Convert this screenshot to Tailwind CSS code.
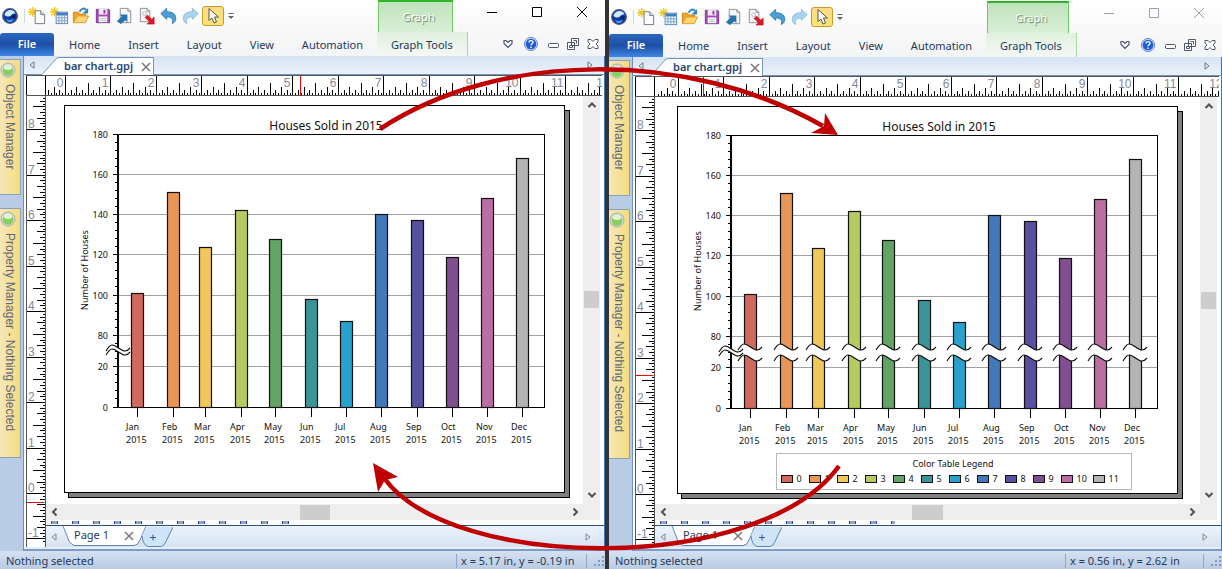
<!DOCTYPE html>
<html lang="en">
<head>
  <meta charset="UTF-8" />
  <meta name="viewport" content="width=device-width, initial-scale=1.0" />
  <title>bar chart.gpj</title>
  <script src="https://cdn.jsdelivr.net/npm/@tailwindcss/browser@4"></script>
</head>
<body class="bg-[#333] font-['Noto_Sans','Open_Sans',sans-serif] text-[11px] text-[#1e395b]">
  <main id="windows" class="relative grid min-h-screen grid-cols-[609fr_613fr] overflow-hidden"></main>

  <script>
    const colors = ["#d2695e", "#e99555", "#f0c75a", "#b5cb60", "#62a464", "#3b9499", "#27a1cd", "#4379b9", "#5652a1", "#804f8f", "#bb6da4", "#b3b5b4"];
    const sales = [
      { month: "Jan", x: 137, value: 101 },
      { month: "Feb", x: 173, value: 151 },
      { month: "Mar", x: 205, value: 124 },
      { month: "Apr", x: 241, value: 142 },
      { month: "May", x: 275, value: 128 },
      { month: "Jun", x: 311, value: 98 },
      { month: "Jul", x: 346, value: 87 },
      { month: "Aug", x: 381, value: 140 },
      { month: "Sep", x: 417, value: 137 },
      { month: "Oct", x: 452, value: 119 },
      { month: "Nov", x: 487, value: 148 },
      { month: "Dec", x: 522, value: 168 }
    ];

    const INCH = 45.48;

    // y of a house count: the axis is cut between 20 and 80
    const yOf = v => v >= 70 ? 295 - (v - 100) * 2.0125 : 407 - v * 2.0125;

    const line = (x1, y1, x2, y2, stroke = "#000", w = 1) =>
      `<line x1="${x1}" y1="${y1}" x2="${x2}" y2="${y2}" stroke="${stroke}" stroke-width="${w}" shape-rendering="crispEdges"/>`;

    const tickLength = i => {
      if (i % 16 === 0) return 20;
      if (i % 8 === 0) return 13;
      if (i % 4 === 0) return 9;
      return i % 2 === 0 ? 6 : 3;
    };

    const mod16 = i => ((i % 16) + 16) % 16;

    const topRuler = w => {
      let out = "";
      const zero = 19.5 + w.scroll;
      for (let i = -12; i < 200; i++) {
        const x = Math.floor(zero + i * INCH / 16) + 0.5;
        if (x < 1) continue;
        out += line(x, 20 - tickLength(mod16(i)), x, 20);
        if (i >= 0 && i % 16 === 0) out += `<text x="${x - 2}" y="11" text-anchor="end">${i / 16}</text>`;
      }
      return out + line(w.markX, 0, w.markX, 20, "#f00");
    };

    const sideRuler = w => {
      let out = "";
      for (let i = -17; i < 142; i++) {
        const y = Math.floor(397.5 - i * INCH / 16) + 0.5;
        if (y < 0) continue;
        out += line(19 - tickLength(mod16(i)), y, 19, y);
        if (mod16(i) === 0) out += `<text x="1" y="${y - 2}">${i / 16}</text>`;
      }
      return out + line(0, w.markY, 17, w.markY, "#f00") + line(17, w.markY, 19, w.markY, "#0ff");
    };

    // crest then trough, 24 wide
    const wave = (x, y) => `M${x} ${y}c3 -5 5 -6 6 -6c5 0 8 6 13 6c3 0 4 -2 5 -3`;
    const waveBack = gap => `l0 ${gap}c-1 1 -2 3 -5 3c-5 0 -8 -6 -13 -6c-1 0 -3 1 -6 6z`;

    const axisBreak = (x, y, gap) =>
      `<path d="${wave(x, y)}${waveBack(gap)}" fill="#fff"/>` +
      `<path d="${wave(x, y)}${wave(x, y + gap)}" fill="none" stroke="#111" stroke-width="1.200"/>`;

    const chart = w => {
      let out = "";
      [180, 160, 140, 120, 100, 80, 20, 0].forEach(v => {
        const y = Math.floor(yOf(v)) + 0.5;
        out += line(118, y, 545, y, v === 180 ? "#777" : "#a0a0a0") + line(113, y, 118, y);
        out += `<text x="108" y="${y + 3}" text-anchor="end">${v}</text>`;
      });
      for (let v = 72; v < 180; v += 4) out += line(115, yOf(v), 118, yOf(v));
      for (let v = 4; v < 28; v += 4) out += line(115, yOf(v), 118, yOf(v));
      out += line(544.5, 134, 544.5, 407) + line(117, 134.5, 545, 134.5) + line(118, 134, 118, 408, "#000", 2) + line(113, 407.5, 545, 407.5);

      sales.forEach((s, i) => {
        const top = Math.round(yOf(s.value) - 0.1) + 0.5;
        out += `<rect x="${s.x - 5.5}" y="${top}" width="12" height="${407.5 - top}" fill="${colors[i]}" stroke="#111" stroke-width="1.200"/>`;
        out += line(s.x + 0.5, 408, s.x + 0.5, 417);
        out += `<text x="${s.x - 11}" y="430">${s.month}</text><text x="${s.x - 11}" y="443">2015</text>`;
        if (w.legend) out += axisBreak(s.x - 12, 349, 11);
      });

      out += axisBreak(106, 351, 4);
      out += `<text x="326" y="130" text-anchor="middle" font-size="12">Houses Sold in 2015</text>`;
      out += `<text transform="translate(88 270) rotate(-90)" text-anchor="middle">Number of Houses</text>`;
      return out;
    };

    const legend = () => {
      let out = `<rect x="163.5" y="452.5" width="355" height="36" fill="#fff" stroke="#b8b8b8"/>`;
      out += `<text x="340" y="466" text-anchor="middle">Color Table Legend</text>`;
      colors.forEach((c, i) => {
        const x = 168.5 + i * 28 + (i === 11 ? 4 : 0);
        out += `<rect x="${x}" y="474.5" width="11" height="7" fill="${c}" stroke="#111"/>`;
        out += `<text x="${x + 15}" y="481">${i}</text>`;
      });
      return out;
    };

    const page = w => `
      <rect x="68" y="110" width="502" height="388" fill="#000"/>
      <rect x="69" y="111" width="500" height="386" fill="#808080"/>
      <rect x="64.5" y="105.5" width="500" height="387" fill="#fff" stroke="#000"/>
      ${chart(w)}${w.legend ? legend() : ""}`;

    const starburst = `<path d="M6 1v10M1 6h10M2.500 2.500l7 7M9.500 2.500l-7 7" stroke="#f3c81c" stroke-width="1.500"/>`;

    const tools = [
      ["New plot", starburst + `<path d="M8.500 5h6l4 4v9.500h-10z" fill="#fafbfc" stroke="#72777e"/><path d="M14.500 5v4h4" fill="#d5d9df" stroke="#72777e"/>`],
      ["New worksheet", starburst + `<rect x="7.500" y="6.500" width="12" height="12" fill="#fff" stroke="#5b87b8"/><path d="M8 7h11v3H8z" fill="#3f7fc4"/><path d="M10.500 10v8M13.500 10v8M16.500 10v8M8 12.500h11M8 15.500h11" stroke="#6f9fce"/>`],
      ["Open", `<path d="M2.500 17.500V6.500h5l2 2h6v3" fill="#f2a42c" stroke="#d48315"/><path d="M2.500 17.500l4-7h12l-3.500 7z" fill="#ffd873" stroke="#e39a22"/><path d="M9 6c2-4 5-4 7-2" fill="none" stroke="#2f86c4" stroke-width="2"/><path d="M18 2v6h-6z" fill="#2f86c4"/>`],
      ["Save", `<path d="M3.500 3.500h13l1 1v13h-14z" fill="#a34cb5" stroke="#75378f"/><rect x="6" y="3" width="9" height="6" fill="#f5e9f8"/><rect x="11" y="4" width="2" height="4" fill="#8b3fa0"/><rect x="6" y="11" width="9" height="6" fill="#fff"/><path d="M7 13h7M7 15h7" stroke="#bfb4c7"/>`],
      ["Import", `<path d="M5.500 2.500h8l3 3v12h-11z" fill="#f5f6f8" stroke="#8b9097"/><path d="M13.500 2.500v3h3" fill="none" stroke="#8b9097"/><path d="M2 16l5-5-2-2h8v8l-2-2-5 4z" fill="#2773ac"/>`],
      ["Export", `<path d="M3.500 2.500h7l3 3v11h-10z" fill="#f5f6f8" stroke="#8b9097"/><path d="M10.500 2.500v3h3" fill="none" stroke="#8b9097"/><circle cx="8" cy="8" r="2" fill="none" stroke="#b6bac1"/><path d="M8.500 12l2.500-2.500 4.500 4.500L18 11.500V19h-7.500l2.500-2.500z" fill="#e11b22" stroke="#a81016" stroke-width=".6"/>`],
      ["Undo", `<path d="M2 8l6-5.500v3.500c7 0 10 3 9.500 8-.3 2-1.500 3.500-3.500 4.500 1.500-5-1-7-6-7V14z" fill="#4b9fd6" stroke="#2d7db5"/>`],
      ["Redo", `<path d="M18 8l-6-5.500v3.500c-7 0-10 3-9.500 8 .3 2 1.500 3.500 3.500 4.500-1.500-5 1-7 6-7V14z" fill="#a8d4ec" stroke="#8abfdd"/>`]
    ];

    const toolButtons = tools.map(([label, art]) => `
      <button class="w-[22px]" aria-label="${label}"><svg class="mx-auto size-5" viewBox="0 0 21 21" fill="none">${art}</svg></button>`).join("");

    const windowHtml = w => `
      <section class="flex min-w-0 flex-col overflow-hidden bg-white ${w.frame}">
        <div class="flex h-8 shrink-0 bg-linear-to-b from-white to-[#f8f8f8]">
          <div class="flex w-[378px] shrink-0 items-center">
            <svg class="ml-0.5 size-4" viewBox="0 0 16 16">
              <circle cx="8" cy="8" r="7.300" fill="#1238a0" stroke="#4a567c" stroke-width="1.300"/>
              <path d="M2.500 7C3 3.500 6 2 8.500 2S13 3.500 13.500 6c-2-1-3 0-4.500 1.500S5 9 2.500 7z" fill="#cdeaf9"/>
              <path d="M4 11c2 1.500 5 1.500 8-.5C11 13 9.500 14 8 14s-3.300-1-4-3z" fill="#43b0ea"/>
              <path d="M8.500 8.500L13.500 6.500q.5 2-1 4z" fill="#0a1c6b"/>
            </svg>
            <span class="mr-px ml-1.5 h-3.5 w-px bg-gray-300"></span>
            ${toolButtons}
            <button class="flex h-5 w-[22px] items-center justify-center rounded-[3px] border border-[#c89a2e] bg-linear-to-b from-[#fbdc84] to-[#fde372]" aria-label="Select">
              <svg class="size-[18px]" viewBox="0 0 18 18"><path d="M5 1.500v12l3-2.500 2 5 2.500-1-2-5h4z" fill="#fff" stroke="#555"/></svg>
            </button>
            <button class="ml-[3px]" aria-label="More tools"><svg class="size-2" viewBox="0 0 8 8"><path d="M1.500 1.500h5" stroke="#666"/><path d="M1 4h6L4 7z" fill="#666"/></svg></button>
          </div>
          <div class="${w.graphTab} flex shrink-0 items-center justify-center border-x border-t-2 border-x-[#6cc864] border-t-[#2bb52b] bg-linear-to-b from-[#bfe3bb] to-[#d9efd6] pl-1.5 text-white [text-shadow:1px_1px_1px_#5d7a5b]">Graph</div>
          <div class="${w.buttons} ml-auto flex h-6 shrink-0">
            <button class="w-11" aria-label="Minimize"><svg class="mx-auto size-3" viewBox="0 0 12 12" stroke="currentColor"><path d="M1 6.500h10"/></svg></button>
            <button class="w-[45px]" aria-label="Maximize"><svg class="mx-auto size-3" viewBox="0 0 12 12" fill="none" stroke="currentColor"><path d="M1.500 1.500h9v9h-9z"/></svg></button>
            <button class="w-[46px]" aria-label="Close"><svg class="mx-auto size-3" viewBox="0 0 12 12" stroke="currentColor"><path d="M1 1l10 10M11 1L1 11"/></svg></button>
          </div>
        </div>

        <nav class="flex h-6 shrink-0 items-center bg-linear-to-b from-[#f8f8f8] to-[#f3f4f5]">
          <button class="mt-px mr-px h-[23px] w-[54px] shrink-0 rounded-t-[3px] bg-linear-to-b from-[#2b67bf] via-[#1d4fa5] to-[#3f86e6] font-semibold text-white">File</button>
          ${["Home", "Insert", "Layout", "View", "Automation"].map(t => `<a href="#" class="px-3.5 pt-0.5">${t}</a>`).join("")}
          <a href="#" class="border-r border-[#a6d8a2] bg-linear-to-b from-[#e0f1de] to-[#f5f7f5] px-3.5 pt-0.5 leading-[22px] whitespace-nowrap">Graph Tools</a>
          <div class="ml-auto flex items-center gap-2 pr-1.5">
            <button aria-label="Collapse ribbon"><svg class="size-3" viewBox="0 0 12 12" fill="none" stroke="#4d566b" stroke-width="1.200"><path d="M2 2.500h2l2 2 2-2h2v3l-4 4-4-4z"/></svg></button>
            <button class="ml-0.5" aria-label="Help"><svg class="size-3.5" viewBox="0 0 14 14"><circle cx="7" cy="7" r="6.500" fill="#d8e4fa" stroke="#5b80cf"/><circle cx="7" cy="7" r="5.300" fill="#1b5bd6"/><path d="M5 5.500c0-2.500 4-2.500 4-.3C9 6.700 7 6.700 7 8.300M7 9.600v1.400" fill="none" stroke="#fff" stroke-width="1.400"/></svg></button>
            <button class="ml-0.5" aria-label="Minimize document"><svg class="h-3 w-[11px]" viewBox="0 0 11 12"><rect x=".5" y="5.500" width="10" height="4" rx="1" fill="#fff" stroke="#4d566b"/></svg></button>
            <button aria-label="Restore document"><svg class="size-3" viewBox="0 0 12 12" fill="#fff" stroke="#4d566b"><path d="M4.500 .5h7v7h-7zM.5 4.500h7v7h-7z"/><path d="M2.500 7.500h3v2h-3zM6.500 2.500h3v3"/></svg></button>
            <button aria-label="Close document"><svg class="size-3" viewBox="0 0 12 12" fill="#fff" stroke="#4d566b"><path d="M1 1.500h3l2 2 2-2h3V4L9 6l2 2v2.500H8l-2-2-2 2H1V8l2-2-2-2z"/></svg></button>
          </div>
        </nav>

        <div class="flex min-h-0 flex-1 border-r border-[#3f76b5] bg-[#b9cce5]">
          <aside class="flex w-[23px] shrink-0 flex-col gap-[13px] pt-[3px]">
            ${["Object Manager", "Property Manager - Nothing Selected"].map((t, i) => `
            <button class="${i ? "h-[250px]" : "h-[136px]"} flex w-[21px] flex-col items-center gap-1.5 border border-l-0 border-[#8aa0bd] bg-linear-to-r from-[#f5e7b7] to-[#f6dc7c] pt-0.5 text-[#626778]">
              <svg class="mr-1 size-4" viewBox="0 0 16 16"><circle cx="8" cy="8" r="7" fill="#d3ddd4" stroke="#a7b1a8"/><circle cx="8" cy="8.500" r="5.300" fill="#86d05f"/><ellipse cx="8" cy="5.500" rx="4" ry="2.500" fill="#e2f5d8"/></svg>
              <span class="[writing-mode:vertical-rl] font-['Liberation_Sans',sans-serif] text-[12px] leading-4 whitespace-nowrap">${t}</span>
            </button>`).join("")}
          </aside>

          <div class="flex min-w-0 flex-1 flex-col border-l border-[#6d8fbd] bg-white">
            <div class="flex h-[19px] shrink-0 items-stretch border-b border-[#7694bb] bg-linear-to-b from-[#d6e3f3] to-[#eaf2fc]">
              <button class="w-[18px]" aria-label="Scroll tabs left"><svg class="ml-1 size-2" viewBox="0 0 8 8" fill="none" stroke="#777"><path d="M6 .8v6.400L2 4z"/></svg></button>
              <svg class="h-[19px] w-[18px]" viewBox="0 0 18 19"><path d="M0 18.500L14 3q1-1.500 4-1.500V19H0z" fill="#fff"/><path d="M0 18.500L14 3q1-1.500 4-1.500" fill="none" stroke="#7694bb"/></svg>
              <div class="mt-px -mb-px flex items-center gap-2 border-t border-r border-[#7694bb] bg-white pr-0.5 pl-1">
                <span class="font-semibold text-[#26466e]">bar chart.gpj</span>
                <button aria-label="Close tab"><svg class="size-2.5" viewBox="0 0 10 10" stroke="#777" stroke-width="1.500"><path d="M1 1l8 8M9 1L1 9"/></svg></button>
              </div>
              <button class="mr-2.5 ml-auto" aria-label="Scroll tabs right"><svg class="size-2" viewBox="0 0 8 8" fill="none" stroke="#777"><path d="M2 .8v6.400L6 4z"/></svg></button>
            </div>

            <div class="mr-0.5 ml-0.5 flex h-[21px] shrink-0 border-t border-b border-[#555]">
              <div class="w-5 shrink-0 border-x border-black"></div>
              <svg class="h-[19px] flex-1 font-['Liberation_Sans',sans-serif] text-[12px]" fill="#85889a">${topRuler(w)}</svg>
            </div>

            <div class="ml-0.5 flex min-h-0 flex-1">
              <div class="w-5 shrink-0 border-r border-l border-[#555]">
                <svg class="h-full w-full font-['Liberation_Sans',sans-serif] text-[12px]" fill="#85889a">${sideRuler(w)}</svg>
              </div>
              <div class="flex min-w-0 flex-1 flex-col">
                <div class="mr-1 flex min-h-0 flex-1">
                  <svg class="h-full min-w-0 flex-1 text-[9px]" fill="#111"><g transform="translate(${w.scroll - 46} -96)">${page(w)}</g></svg>
                  <div class="flex w-[17px] shrink-0 flex-col items-center bg-[#eee]">
                    <svg class="mt-1 size-2.5" viewBox="0 0 10 10" fill="none" stroke="#505050" stroke-width="2"><path d="M1.500 7L5 3.500 8.500 7"/></svg>
                    <div class="mt-[181px] h-[17px] w-[15px] bg-[#cdcdcd]"></div>
                    <svg class="mt-auto mb-1 size-2.5" viewBox="0 0 10 10" fill="none" stroke="#505050" stroke-width="2"><path d="M1.500 3L5 6.500 8.500 3"/></svg>
                  </div>
                </div>
                <div class="mr-1 flex h-4 shrink-0 items-center bg-[#eee]">
                  <svg class="ml-1 size-2.5" viewBox="0 0 10 10" fill="none" stroke="#505050" stroke-width="2"><path d="M6.500 1.500L3 5l3.500 3.500"/></svg>
                  <div class="${w.thumb} h-[15px] bg-[#cdcdcd]"></div>
                  <svg class="mr-5 ml-auto size-2.5" viewBox="0 0 10 10" fill="none" stroke="#505050" stroke-width="2"><path d="M3.500 1.500L7 5 3.500 8.500"/></svg>
                </div>
                <div class="flex h-1.5 shrink-0 items-end border-b border-[#2d4f7c]">
                  <svg class="h-1 w-full" preserveAspectRatio="none"><path d="M5 1.500H${w.dashes}" stroke="#8ea4cc" stroke-width="3" stroke-dasharray="7 14"/><path d="M5 1.500H${w.dashes}" stroke="#334a78" stroke-width="3" stroke-dasharray="1 5 1 14"/></svg>
                </div>
                <div class="flex h-[21px] shrink-0 bg-linear-to-b from-[#ecf3fc] to-[#d7e3f2]">
                  <button class="w-4 shrink-0" aria-label="Previous page"><svg class="ml-1 size-2" viewBox="0 0 8 8" fill="none" stroke="#888"><path d="M6 .8v6.400L2 4z"/></svg></button>
                  <div class="flex shrink-0">
                    <svg class="h-5 w-3" viewBox="0 0 12 20"><path d="M0 0l7 15q3 4 5 4V0z" fill="#fff"/><path d="M1 0l6 15q3 4 5 4.500" fill="none" stroke="#5d84b8"/></svg>
                    <div class="flex h-5 items-center gap-[15px] border-b border-[#5d84b8] bg-white">
                      <a href="#">Page 1</a>
                      <button aria-label="Close page"><svg class="size-2.5" viewBox="0 0 10 10" stroke="#777" stroke-width="1.500"><path d="M1 1l8 8M9 1L1 9"/></svg></button>
                    </div>
                    <svg class="h-5 w-3" viewBox="0 0 12 20"><path d="M0 0v19q4 0 6-5l6-14z" fill="#fff"/><path d="M0 19.500q4 0 6-5.500L12 0" fill="none" stroke="#5d84b8"/></svg>
                    <button aria-label="Add page"><svg class="-ml-1 h-5 w-[31px]" viewBox="0 0 31 20"><path d="M4 0L0 9q1 9 6 10.500h13q3 0 5-5L31 0z" fill="#cfe4f7"/><path d="M0 9q1 9 6 10.500h13q3 0 5-5L31 0" fill="none" stroke="#5d84b8"/><path d="M8 10.500h6M11 7.500v6" stroke="#2f5a92"/></svg></button>
                  </div>
                  <button class="mr-3 ml-auto" aria-label="Next page"><svg class="size-2" viewBox="0 0 8 8" fill="none" stroke="#888"><path d="M2 .8v6.400L6 4z"/></svg></button>
                </div>
              </div>
            </div>
            <div class="h-1 shrink-0 border-b-2 border-[#7d9cc6] bg-[#e6eef8]"></div>
          </div>
        </div>

        <footer class="flex h-[18px] shrink-0 items-center bg-linear-to-b from-[#d5e1f1] to-[#b9cbe3] pt-0.5 pl-1.5">
          <span>Nothing selected</span>
          <span class="${w.coords} ml-auto h-[14px] border-x border-[#8fa5c4] pl-1 leading-[14px] whitespace-nowrap">${w.position}</span>
          <svg class="ml-1.5 size-3" viewBox="0 0 12 12" fill="#7f9ac4"><path d="M9 1h2v2H9zM5 5h2v2H5zM9 5h2v2H9zM1 9h2v2H1zM5 9h2v2H5zM9 9h2v2H9z"/></svg>
        </footer>
      </section>`;

    const windows = [
      { frame: "border-r-4 border-[#333]", graphTab: "w-[75px]", buttons: "text-black", scroll: 0, markX: 254.5, markY: 406.5, thumb: "ml-[240px] w-[30px]", dashes: 244, coords: "w-[131px]", position: "x = 5.17 in, y = -0.19 in", legend: false },
      { frame: "pt-px", graphTab: "w-[82px]", buttons: "text-gray-400", scroll: 4, markX: 48.5, markY: 278.5, thumb: "ml-[243px] w-[31px]", dashes: 240, coords: "w-[139px]", position: "x = 0.56 in, y = 2.62 in", legend: true }
    ];

    // arrows that join the two charts
    const arrows = `
      <svg class="pointer-events-none absolute inset-0 h-full w-full" viewBox="0 0 1222 569" preserveAspectRatio="none">
        <path d="M380 129C500 50 690 50 823 126M839 466C760 575 452 572 384 478" fill="none" stroke="#c00000" stroke-width="4.500"/>
        <path d="M838 135l-13-22-1 13-13 7zM373 463l25 14-13 3-7 12z" fill="#c00000"/>
      </svg>`;

    document.getElementById("windows").innerHTML = windows.map(windowHtml).join("") + arrows;
  </script>
</body>
</html>
